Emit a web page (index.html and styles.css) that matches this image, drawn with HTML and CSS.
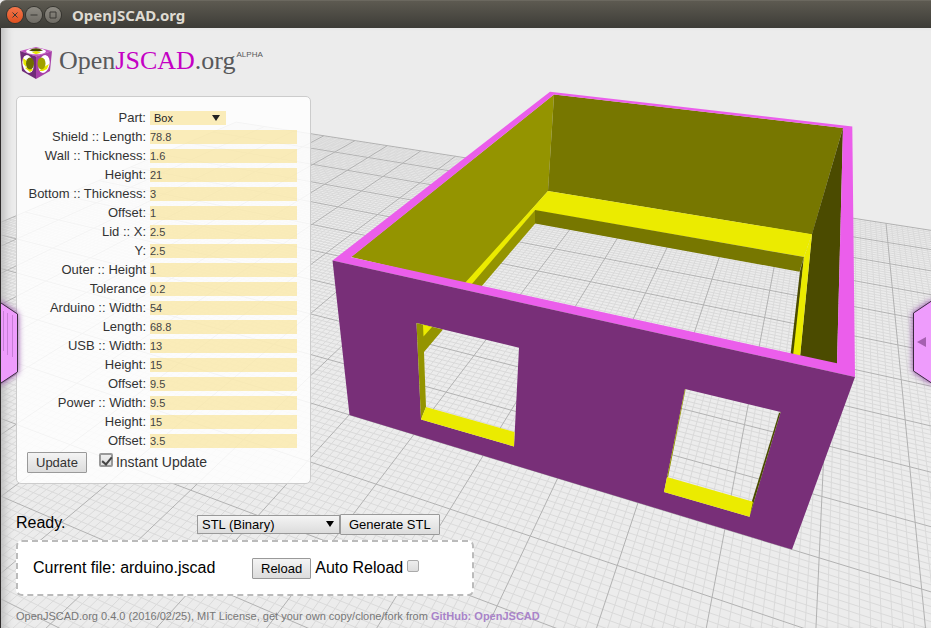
FILE: index.html
```html
<!DOCTYPE html>
<html lang="en">
<head>
    <meta charset="UTF-8">
    <meta name="viewport" content="width=device-width, initial-scale=1.0">
    <title>OpenJSCAD.org</title>
    <link rel="stylesheet" href="styles.css">
</head>
<body>

<header class="titlebar">
    <button class="win-btn close" aria-label="Close">
        <svg viewBox="0 0 16 16"><path d="M5.5 5.5l5 5M10.5 5.5l-5 5"/></svg>
    </button>
    <button class="win-btn" aria-label="Minimize">
        <svg viewBox="0 0 16 16"><path d="M4.5 8h7"/></svg>
    </button>
    <button class="win-btn" aria-label="Maximize">
        <svg viewBox="0 0 16 16"><path d="M5 5h6v6h-6z"/></svg>
    </button>
    <span class="title">OpenJSCAD.org</span>
</header>

<main class="viewer">
    <svg class="scene" viewBox="0 28 931 600" preserveAspectRatio="xMinYMin slice" aria-hidden="true">
        <path id="gridMinor" class="grid-minor"/>
        <path id="gridMajor" class="grid-major"/>
        <!-- inside walls -->
        <path class="olive" d="M351 257L554 94.5L548 191L466 284z"/>
        <path class="olive-dark" d="M554 94.5L843 128L812 234.5L548 191z"/>
        <path class="shade" d="M843 128L812 234L800 357L837 364z"/>
        <!-- ledge -->
        <path class="yellow" d="M548 191L812 234.3L804 257L535 210.5L472 285L464 284z"/>
        <path class="olive" d="M535.2 210L535.2 223.5L481 287L471 285z"/>
        <path class="olive-dark" d="M535 210L804 257L799.5 271.7L535 223.5z"/>
        <path class="shade" d="M804 257L800 271L790.5 355L794 356z"/>
        <path class="yellow" d="M812 234L804 257L793 356L800 357z"/>
        <!-- rim -->
        <path class="pink" fill-rule="evenodd" d="M332.5 260.5L550 91.7L852.3 126.5L855 377z M351 257.3L837 363.3L843 128L554 94.5z"/>
        <!-- front wall with the two openings -->
        <path class="purple" fill-rule="evenodd" d="M332.5 260.5L855 377L792 549.5L349.5 415z M416.5 323L519 347.7L514 446.5L421 419.5z M685 389L780.7 412L749.5 516.7L664 492z"/>
        <path class="olive" d="M416.5 323L443 329.5L424 352L426 407L421 419.5z"/>
        <path class="yellow" d="M423 324.7L432 327L423.5 336.5z"/>
        <path class="yellow" d="M426 407L514.5 432L514 446.5L421 419.5z"/>
        <path class="shade" d="M780.7 412L779 413L752 501L749.5 516.7z"/>
        <path class="olive" d="M685 389L685.6 389.2L668 477.5L667 477z"/>
        <path class="yellow" d="M667 477L753 501.7L749.5 516.7L664 492z"/>
    </svg>

    <div class="brand">
        <svg class="cube" viewBox="0 0 34 34" aria-hidden="true">
            <path fill="#c050c0" d="M17 1L33 5L17 10.5L1 5z"/>
            <path fill="#702c78" d="M1 5L17 10.5V33L3 25z"/>
            <path fill="#a840a8" d="M33 5L17 10.5V33L31 25z"/>
            <ellipse cx="17" cy="5.3" rx="10" ry="3" fill="#fff"/>
            <path fill="#4c4c00" d="M10 4.5Q17 0 24 4.5Q17 6.5 10 4.5z"/>
            <path fill="#e8e800" d="M13 6.5L17 5L22 6.5L17 8.3z"/>
            <ellipse cx="9" cy="18" rx="5.5" ry="9" fill="#fff" transform="rotate(-12 9 18)"/>
            <ellipse cx="25" cy="18" rx="5.5" ry="9" fill="#fff" transform="rotate(12 25 18)"/>
            <path fill="#e8e800" d="M4 12L8 15L7 21L4.500 18z M6 22L11 20L14 24L11 26z M20 25L25 21L30 18L28 23L24 25z"/>
            <ellipse cx="11" cy="17.5" rx="4" ry="6" fill="#6f6f00"/>
            <ellipse cx="22.500" cy="17.5" rx="4" ry="6" fill="#a0a000"/>
        </svg>
        <span class="brand-name">Open<b>JSCAD</b>.org</span>
        <sup>ALPHA</sup>
    </div>

    <form class="params" onsubmit="return false">
        <div class="fields">
            <label for="part">Part:</label>
            <span class="select part">
                <select id="part"><option>Box</option><option>Lid</option></select>
            </span>
            <label for="shieldLength">Shield :: Length:</label>
            <input id="shieldLength" type="text" value="78.8">
            <label for="wall">Wall :: Thickness:</label>
            <input id="wall" type="text" value="1.6">
            <label for="wallHeight">Height:</label>
            <input id="wallHeight" type="text" value="21">
            <label for="bottom">Bottom :: Thickness:</label>
            <input id="bottom" type="text" value="3">
            <label for="bottomOffset">Offset:</label>
            <input id="bottomOffset" type="text" value="1">
            <label for="lidX">Lid :: X:</label>
            <input id="lidX" type="text" value="2.5">
            <label for="lidY">Y:</label>
            <input id="lidY" type="text" value="2.5">
            <label for="outerHeight">Outer :: Height</label>
            <input id="outerHeight" type="text" value="1">
            <label for="tolerance">Tolerance</label>
            <input id="tolerance" type="text" value="0.2">
            <label for="arduinoWidth">Arduino :: Width:</label>
            <input id="arduinoWidth" type="text" value="54">
            <label for="arduinoLength">Length:</label>
            <input id="arduinoLength" type="text" value="68.8">
            <label for="usbWidth">USB :: Width:</label>
            <input id="usbWidth" type="text" value="13">
            <label for="usbHeight">Height:</label>
            <input id="usbHeight" type="text" value="15">
            <label for="usbOffset">Offset:</label>
            <input id="usbOffset" type="text" value="9.5">
            <label for="powerWidth">Power :: Width:</label>
            <input id="powerWidth" type="text" value="9.5">
            <label for="powerHeight">Height:</label>
            <input id="powerHeight" type="text" value="15">
            <label for="powerOffset">Offset:</label>
            <input id="powerOffset" type="text" value="3.5">
        </div>
        <div class="actions">
            <button class="btn">Update</button>
            <input id="instant" type="checkbox" checked>
            <label for="instant">Instant Update</label>
        </div>
    </form>

    <div class="status">
        <span class="message">Ready.</span>
        <span class="select format">
            <select aria-label="Format"><option>STL (Binary)</option><option>STL (ASCII)</option></select>
        </span>
        <button class="btn">Generate STL</button>
    </div>

    <div class="dropzone">
        <span class="file">Current file: arduino.jscad</span>
        <button class="btn">Reload</button>
        <label for="autoReload">Auto Reload</label>
        <input id="autoReload" type="checkbox">
    </div>

    <footer>OpenJSCAD.org 0.4.0 (2016/02/25), MIT License, get your own copy/clone/fork from <a href="#">GitHub: OpenJSCAD</a></footer>

    <button class="tab left" aria-label="Open menu">
        <svg viewBox="0 0 26 104">
            <path class="tab-shape" d="M-2 9L17.5 22V80L-2 93z"/>
            <path class="grip" d="M3.5 19v40M7.5 21v42M12.5 23v42"/>
        </svg>
    </button>
    <button class="tab right" aria-label="Open editor">
        <svg viewBox="0 0 26 104">
            <path class="tab-shape" d="M28 8L8.5 21V79L28 92z"/>
            <path class="arrow" d="M12 50l9-5v10z"/>
        </svg>
    </button>
</main>

<script src="grid.js"></script>
</body>
</html>
```

FILE: styles.css
```css
* {
    box-sizing: border-box;
}
body {
    margin: 0;
    min-height: 100vh;
    display: flex;
    flex-direction: column;
    font-family: "Liberation Sans", Arial, sans-serif;
    font-size: 16px;
    color: #000;
    background: #ececec;
}
button, input, select {
    font-family: inherit;
    margin: 0;
}

/* window title */
.titlebar {
    display: flex;
    align-items: center;
    gap: 3px;
    height: 28px;
    padding: 0 7px;
    background: linear-gradient(#5d5a51, #3d3c37);
    border-top: 1px solid #6b685f;
    border-radius: 6px 0 0 0;
}
.win-btn {
    width: 16px;
    height: 16px;
    padding: 0;
    border: 0;
    border-radius: 50%;
    background: linear-gradient(#8d8a82, #6f6c65);
    box-shadow: 0 0 0 1px #35342f;
}
.win-btn svg {
    display: block;
    fill: none;
    stroke: #3a3934;
}
.win-btn.close {
    background: linear-gradient(#f4764b, #e0501f);
}
.title {
    margin-left: 8px;
    font-family: "Noto Sans", sans-serif;
    font-size: 15px;
    font-weight: bold;
    color: #dfdbd2;
}

.viewer {
    position: relative;
    flex: 1;
    padding: 18px 16px 4px 15px;
    border-left: 1px solid #2e2b2b;
    overflow: hidden;
    box-shadow: inset 10px 0 8px -6px #bbb;
}

/* 3d view */
.scene {
    position: absolute;
    inset: 0 0 0 -1px;
    width: calc(100% + 1px);
    height: 100%;
    z-index: -1;
}
.grid-minor, .grid-major {
    fill: none;
    stroke: #dadada;
}
.grid-major {
    stroke: #b2b2b2;
}
.pink { fill: #eb5eeb; }
.purple { fill: #782f78; }
.yellow { fill: #ebeb00; }
.olive { fill: #949400; }
.olive-dark { fill: #777700; }
.shade { fill: #4b4b00; }

.brand {
    display: flex;
    align-items: flex-start;
    height: 50px;
    margin-left: 3px;
}
.cube {
    width: 34px;
    height: 34px;
}
.brand-name {
    margin-left: 6px;
    font-family: "Liberation Serif", serif;
    font-size: 26px;
    line-height: 30px;
    color: #58595b;
}
.brand-name b {
    font-weight: normal;
    color: #c400c4;
}
.brand sup {
    margin: 4px 0 0 1px;
    font-size: 8px;
    line-height: 10px;
    color: #58595b;
}

/* parameters */
.params {
    width: 295px;
    padding: 14px 13px 10px 10px;
    border: 1px solid #ccc;
    border-radius: 5px;
    background: rgba(255, 255, 255, 0.85);
    color: #333;
}
.fields {
    display: grid;
    grid-template-columns: 1fr 147px;
    grid-auto-rows: 14px;
    gap: 5px 4px;
    font-size: 13px;
    line-height: 14px;
    text-align: right;
}
.fields input, .part {
    height: 14px;
    padding: 0;
    border: 0;
    font-size: 11px;
    line-height: 14px;
    color: #444;
    background: rgba(248, 225, 140, 0.6);
}
.select {
    position: relative;
    display: block;
}
.select select {
    appearance: none;
    display: block;
    width: 100%;
    height: 100%;
    padding: 0 4px;
    border: 0;
    background: none;
    font-size: inherit;
    color: inherit;
}
.select::after {
    content: "";
    position: absolute;
    right: 6px;
    top: 4px;
    border: 4px solid transparent;
    border-top: 6px solid #222;
    border-bottom: 0;
    pointer-events: none;
}
.part {
    width: 76px;
    color: #222;
}
.actions {
    display: flex;
    align-items: center;
    margin-top: 4px;
    font-size: 14px;
}
.actions label {
    padding-bottom: 2px;
}
.btn {
    height: 21px;
    padding: 0 8px;
    border: 1px solid #999;
    border-radius: 1px;
    background: linear-gradient(#f4f4f4, #dcdcdc);
    font-size: 13px;
    line-height: 19px;
    color: inherit;
}
input[type=checkbox] {
    appearance: none;
    position: relative;
    width: 12px;
    height: 12px;
    border: 1px solid #aaa;
    border-radius: 2px;
    background: linear-gradient(#eee, #ddd);
}
.actions input[type=checkbox] {
    width: 14px;
    height: 14px;
    margin: 0 3px 5px 12px;
    border: 2px solid #999;
}
input[type=checkbox]:checked::after {
    content: "";
    position: absolute;
    left: 3px;
    top: 0;
    width: 4px;
    height: 8px;
    border: solid #444;
    border-width: 0 2px 2px 0;
    transform: rotate(40deg);
}

.status {
    display: grid;
    grid-template-columns: 181px 143px auto;
    justify-content: start;
    align-items: center;
    margin-top: 30px;
}
.message {
    line-height: 18px;
    padding-bottom: 3px;
}
.format {
    height: 19px;
    border: 1px solid #999;
    background: linear-gradient(#f4f4f4, #dcdcdc);
    font-size: 13px;
}
.format::after {
    top: 5px;
    right: 5px;
    border-top-color: #000;
}

.dropzone {
    display: flex;
    align-items: center;
    width: 458px;
    height: 56px;
    margin-top: 5px;
    padding: 0 15px;
    border: 2px dashed #bbb;
    border-radius: 6px;
    background: #fff;
}
.file {
    width: 219px;
}
.dropzone label {
    margin: 0 4px;
}
.dropzone input {
    margin-bottom: 4px;
}

footer {
    margin-top: 13px;
    font-size: 11px;
    line-height: 14px;
    color: #777;
}
footer a {
    font-weight: bold;
    color: #a883c9;
    text-decoration: none;
}

/* side tabs */
.tab {
    position: absolute;
    top: 44%;
    width: 26px;
    height: 104px;
    padding: 0;
    border: 0;
    background: none;
}
.tab.left { left: -1px; }
.tab.right { right: 0; }
.tab svg {
    display: block;
}
.tab-shape {
    fill: #ee9cfc;
    stroke: #3a2a3f;
    filter: drop-shadow(0 0 3px #8a3aa0);
}
.grip {
    stroke: #c77fd6;
    stroke-width: 1;
}
.arrow {
    fill: #a560b0;
}
```

FILE: grid.js
```js
// Ground plane to screen, 1 unit = one major cell
function depth(a, b) {
    return 1 - 0.03377 * a - 0.07697 * b;
}

function project(a, b) {
    const w = depth(a, b);
    const x = (349.3 + 50.64 * a - 65.47 * b) / w;
    const y = (414.8 + 5 * a + 10.74 * b) / w;
    return x.toFixed(1) + ' ' + y.toFixed(1);
}

// Last value before the line passes behind the camera
function limit(base, step) {
    return Math.min(10, (base - 0.1) / step);
}

function gridPath(filter) {
    let d = '';
    for (let i = -100; i <= 100; i++) {
        if (!filter(i)) continue;
        const t = i / 10;
        const bEnd = limit(1 - 0.03377 * t, 0.07697);
        const aEnd = limit(1 - 0.07697 * t, 0.03377);
        d += 'M' + project(t, -10) + 'L' + project(t, bEnd);
        d += 'M' + project(-10, t) + 'L' + project(aEnd, t);
    }
    return d;
}

document.getElementById('gridMinor').setAttribute('d', gridPath(i => i % 10 !== 0));
document.getElementById('gridMajor').setAttribute('d', gridPath(i => i % 10 === 0));
```
